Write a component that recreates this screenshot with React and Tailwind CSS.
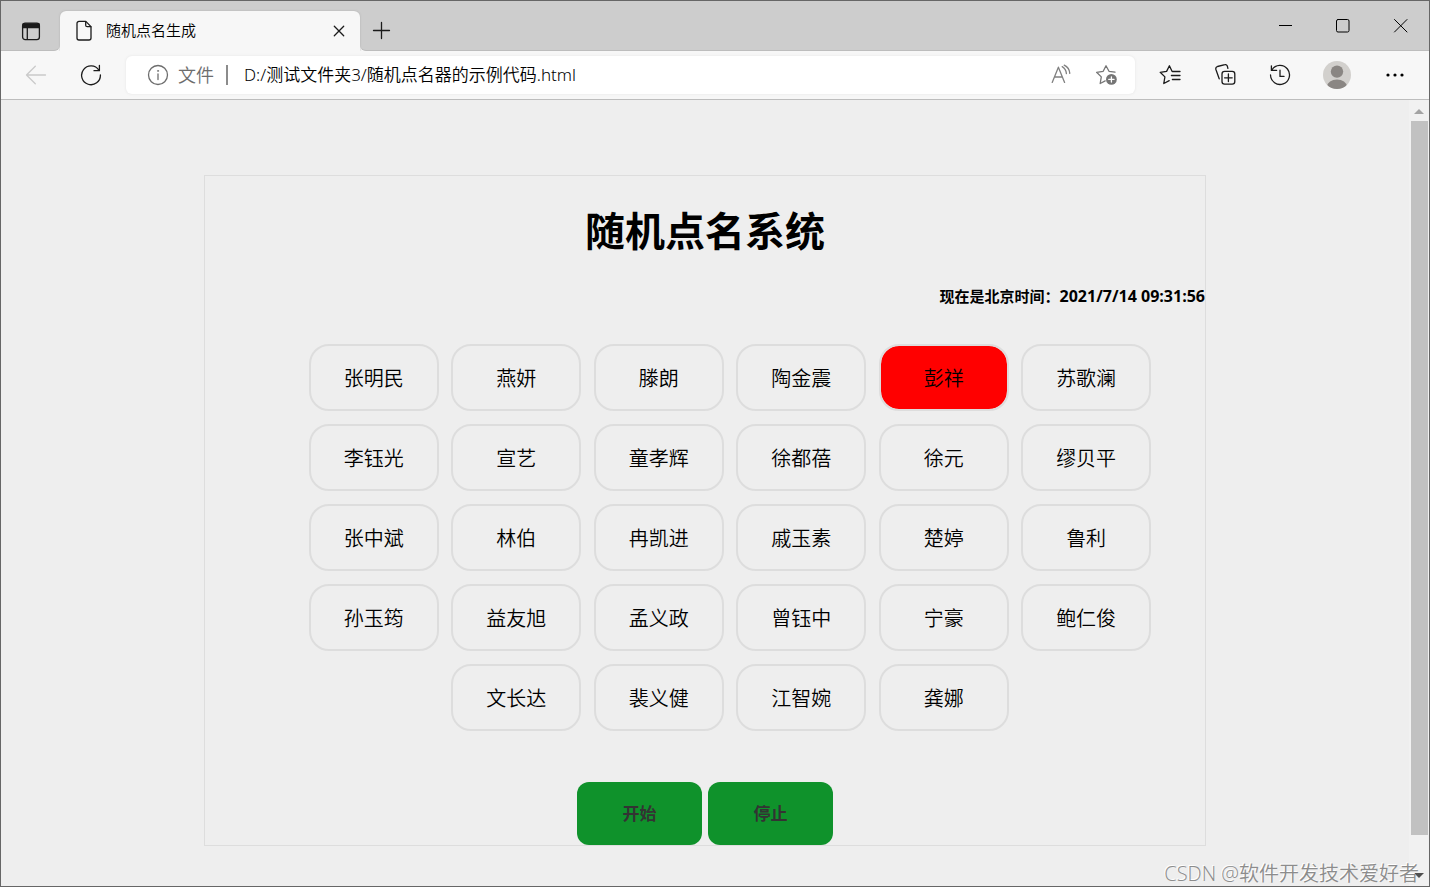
import { useEffect, useState } from 'react';

const names = [
    '张明民', '燕妍', '滕朗', '陶金震', '彭祥', '苏歌澜',
    '李钰光', '宣艺', '童孝辉', '徐都蓓', '徐元', '缪贝平',
    '张中斌', '林伯', '冉凯进', '戚玉素', '楚婷', '鲁利',
    '孙玉筠', '益友旭', '孟义政', '曾钰中', '宁豪', '鲍仁俊',
    '文长达', '裴义健', '江智婉', '龚娜',
];

function Icon({ size = 22, className = '', children }) {
    return (
        <svg
            width={size}
            height={size}
            viewBox={`0 0 ${size} ${size}`}
            className={`fill-none stroke-current ${className}`}
            strokeWidth="1.3"
            strokeLinecap="round"
            strokeLinejoin="round"
            aria-hidden="true"
        >
            {children}
        </svg>
    );
}

function IconButton({ label, className = '', children }) {
    return (
        <button type="button" aria-label={label} className={`flex shrink-0 items-center justify-center ${className}`}>
            {children}
        </button>
    );
}

function TitleBar() {
    return (
        <header className="flex h-[50px] bg-[#f7f7f7]">
            <div className="flex w-[59px] shrink-0 items-center justify-center rounded-br-md border-b border-[#bdbdbd] bg-[#cdcdcd] pt-3">
                <IconButton label="标签页操作">
                    <Icon className="text-[#1b1b1b]">
                        <rect x="2.6" y="2.2" width="16.8" height="16.4" rx="2.6" />
                        <path d="M3 3h16v3.6H3z" className="fill-current" />
                        <path d="M7.3 7v11.4" />
                    </Icon>
                </IconButton>
            </div>
            <div className="flex w-[300px] shrink-0 bg-[#cdcdcd] pt-[10px]">
                <div className="flex flex-1 items-center rounded-t-md bg-[#f7f7f7] pr-[10px] pb-0.5 pl-[14px] shadow-[0_0_2px_#aaaaaa] [clip-path:inset(-3px_-3px_0_-3px)]">
                    <Icon className="text-[#1b1b1b]">
                        <path d="M5 2.4h6.8l5.2 5.2v11.4a2 2 0 0 1-2 2H5a2 2 0 0 1-2-2V4.4a2 2 0 0 1 2-2z" />
                        <path d="M11.7 2.6v3.6a1.5 1.5 0 0 0 1.5 1.5h3.6" />
                    </Icon>
                    <span className="ml-[10px] flex-1 text-[15px] leading-5 text-black">随机点名生成</span>
                    <IconButton label="关闭标签页">
                        <Icon className="text-[#1b1b1b]">
                            <path d="M6.3 7.3l9.4 9.4M15.7 7.3l-9.4 9.4" />
                        </Icon>
                    </IconButton>
                </div>
            </div>
            <div className="flex flex-1 items-start rounded-bl-md border-b border-[#bdbdbd] bg-[#cdcdcd]">
                <IconButton label="新建标签页" className="mt-[19px] ml-[10px]">
                    <Icon className="text-[#1b1b1b]">
                        <path d="M11.5 2.5v16M3.5 10.5h16" />
                    </Icon>
                </IconButton>
                <div className="mt-[14px] mr-[17px] ml-auto flex gap-9">
                    <IconButton label="最小化">
                        <Icon className="text-black">
                            <path d="M5 10.5h13" strokeWidth="1" strokeLinecap="butt" />
                        </Icon>
                    </IconButton>
                    <IconButton label="最大化">
                        <Icon className="text-black">
                            <rect x="4.5" y="4.5" width="12.5" height="12.5" rx="1.5" strokeWidth="1" />
                        </Icon>
                    </IconButton>
                    <IconButton label="关闭">
                        <Icon className="text-black">
                            <path d="M4.5 4.5l12.5 12.5M17 4.5L4.5 17" strokeWidth="1" />
                        </Icon>
                    </IconButton>
                </div>
            </div>
        </header>
    );
}

function Toolbar() {
    return (
        <nav className="flex h-[49px] items-center border-b border-[#bdbdbd] bg-[#f7f7f7] pr-[23px] pl-6">
            <IconButton label="后退">
                <Icon className="text-[#cacaca]">
                    <path d="M20.5 11H1.5M10.3 2.2L1.5 11l8.8 8.8" />
                </Icon>
            </IconButton>
            <IconButton label="刷新" className="ml-[33px]">
                <Icon className="text-[#1b1b1b]">
                    <path d="M18.9 6.2A9.4 9.4 0 1 0 20.4 11" />
                    <path d="M19.4 1.5v5.2h-5.4" />
                </Icon>
            </IconButton>
            <div className="ml-6 flex h-[38px] flex-1 items-center rounded-md bg-white pr-[17px] pl-[21px] shadow-[0_0_3px_#e4e4e4]">
                <Icon className="text-[#6d6d6d]">
                    <circle cx="11" cy="11" r="9.5" />
                    <path d="M11 10v5.6" />
                    <circle cx="11" cy="6.9" r="0.6" className="fill-current" strokeWidth="0.6" />
                </Icon>
                <label htmlFor="address" className="ml-[9px] text-[18px] leading-6 text-[#6d6d6d]">文件</label>
                <span className="ml-3 h-5 w-0.5 bg-[#8c8c8c]" />
                <input
                    id="address"
                    type="text"
                    defaultValue="D:/测试文件夹3/随机点名器的示例代码.html"
                    className="ml-4 min-w-0 flex-1 bg-transparent font-['Noto_Sans','Noto_Sans_CJK_SC',sans-serif] text-[17px] leading-6 text-black outline-none"
                />
                <IconButton label="大声朗读">
                    <Icon className="text-[#808080]">
                        <path d="M3.2 18.4L9.4 3.2l6.2 15.2M5.5 13h7.8" />
                        <path d="M13.2 2.6c2.6 1.6 4 3.8 4.2 7M15.2 1.2c3.6 1.8 5.4 4.6 5.6 8.2" />
                    </Icon>
                </IconButton>
                <IconButton label="添加到收藏夹" className="ml-[23px]">
                    <Icon size={24} className="text-[#757575]">
                        <path d="M21 9.2l-6-.9L12 2.8 9.2 8.3 2.6 9.3l4.7 4.6-1.1 6.6 5-2.6" />
                        <circle cx="17.4" cy="16.4" r="5.4" className="fill-current" stroke="none" />
                        <path d="M17.4 13.8v5.2M14.8 16.4H20" stroke="#ffffff" />
                    </Icon>
                </IconButton>
            </div>
            <IconButton label="收藏夹" className="ml-6">
                <Icon size={24} className="text-[#1b1b1b]">
                    <path d="M13 8.2L10.4 2.8 7.6 8.4 1.2 9.3l4.7 4.6-1.1 6.6 5.4-2.9M13.4 8.5H21M12.4 12.5H21M13.4 16.5H21" />
                </Icon>
            </IconButton>
            <IconButton label="集锦" className="ml-8">
                <Icon size={22} className="text-[#1b1b1b]">
                    <rect x="7" y="7.4" width="12.8" height="12.8" rx="2.6" />
                    <path d="M13.4 10v7.6M9.6 13.8h7.6" />
                    <path d="M4.2 14.8L0.9 5.5a2.4 2.4 0 0 1 1.6-3l7.4-1.8a2 2 0 0 1 2.5 1.6l.5 2" />
                </Icon>
            </IconButton>
            <IconButton label="历史记录" className="ml-8">
                <Icon className="text-[#1b1b1b]">
                    <path d="M3 5.8A9.5 9.5 0 1 1 1.5 11" />
                    <path d="M2.4 1.8v4.6H7.6M11 6.2v6.2h4" />
                </Icon>
            </IconButton>
            <IconButton label="个人资料" className="ml-8">
                <svg width="28" height="28" viewBox="0 0 28 28" className="rounded-full bg-[#d2d0cd] fill-[#8a8683]" aria-hidden="true">
                    <circle cx="14" cy="10.6" r="6.2" />
                    <ellipse cx="14" cy="25.2" rx="9.8" ry="6.8" />
                </svg>
            </IconButton>
            <IconButton label="设置及其他" className="ml-[33px]">
                <svg width="22" height="22" viewBox="0 0 22 22" className="fill-black" aria-hidden="true">
                    <circle cx="4" cy="11" r="1.6" />
                    <circle cx="11" cy="11" r="1.6" />
                    <circle cx="18" cy="11" r="1.6" />
                </svg>
            </IconButton>
        </nav>
    );
}

function ScrollBar() {
    return (
        <div className="flex w-5 shrink-0 flex-col items-center bg-[#f1f1f1]" aria-hidden="true">
            <svg width="20" height="21" viewBox="0 0 20 21" className="fill-[#a3a3a3]">
                <path d="M5 14l5-5 5 5z" />
            </svg>
            <div className="flex w-full flex-1 flex-col pr-px pl-0.5">
                <div className="flex-[714] bg-[#c1c1c1]" />
                <div className="flex-[29]" />
            </div>
            <svg width="20" height="22" viewBox="0 0 20 22" className="fill-[#505050]">
                <path d="M5 9l5 5 5-5z" />
            </svg>
        </div>
    );
}

function RollCall() {
    const [active, setActive] = useState(4);
    const [running, setRunning] = useState(false);

    useEffect(() => {
        if (!running) return;
        const timer = setInterval(() => {
            setActive(Math.floor(Math.random() * names.length));
        }, 100);
        return () => clearInterval(timer);
    }, [running]);

    return (
        <section className="mx-auto mt-[75px] w-full max-w-[1002px] border border-[#dddddd] pt-[25px] text-center text-black">
            <h1 className="text-[40px] leading-[60px] font-bold">随机点名系统</h1>
            <p className="mt-[25px] text-right text-[15px] leading-5 font-bold">
                现在是北京时间：<time className="text-[16px] leading-5">2021/7/14 09:31:56</time>
            </p>
            <ul className="mt-[38px] pl-[50px] font-['Liberation_Sans']">
                {names.map((name, index) => (
                    <li key={name} className="inline">
                        <span
                            className={`mx-1 mb-[13px] inline-block h-[67px] w-[130px] rounded-[20px] border-2 border-[#dddddd] bg-clip-padding align-top font-['Open_Sans','Noto_Sans_CJK_SC',sans-serif] text-[20px] leading-[66px] ${index === active ? 'bg-[#ff0000]' : ''}`}
                        >
                            {name}
                        </span>
                        {' '}
                    </li>
                ))}
            </ul>
            <div className="mt-[38px] flex justify-center gap-1.5 text-[17px] font-bold text-[#333333]">
                <button type="button" onClick={() => setRunning(true)} className="h-[63px] w-[125px] rounded-xl bg-[#0f922b]">
                    开始
                </button>
                <button type="button" onClick={() => setRunning(false)} className="h-[63px] w-[125px] rounded-xl bg-[#0f922b]">
                    停止
                </button>
            </div>
        </section>
    );
}

function App() {
    return (
        <div className="h-screen bg-white pr-1 pb-[5px] font-['Open_Sans','Noto_Sans_CJK_SC',sans-serif] font-[350]">
            <div className="relative flex h-full flex-col overflow-hidden border border-[#666666] bg-[#eeeeee]">
                <TitleBar />
                <Toolbar />
                <div className="flex min-h-0 flex-1">
                    <main className="min-w-0 flex-1 overflow-hidden">
                        <RollCall />
                    </main>
                    <ScrollBar />
                </div>
                <span className="absolute right-[10px] bottom-0 text-[20px] leading-6 text-[#8c8c8c] [text-shadow:-1px_-1px_0_#ffffff]">
                    CSDN @软件开发技术爱好者
                </span>
            </div>
        </div>
    );
}

export default App;
